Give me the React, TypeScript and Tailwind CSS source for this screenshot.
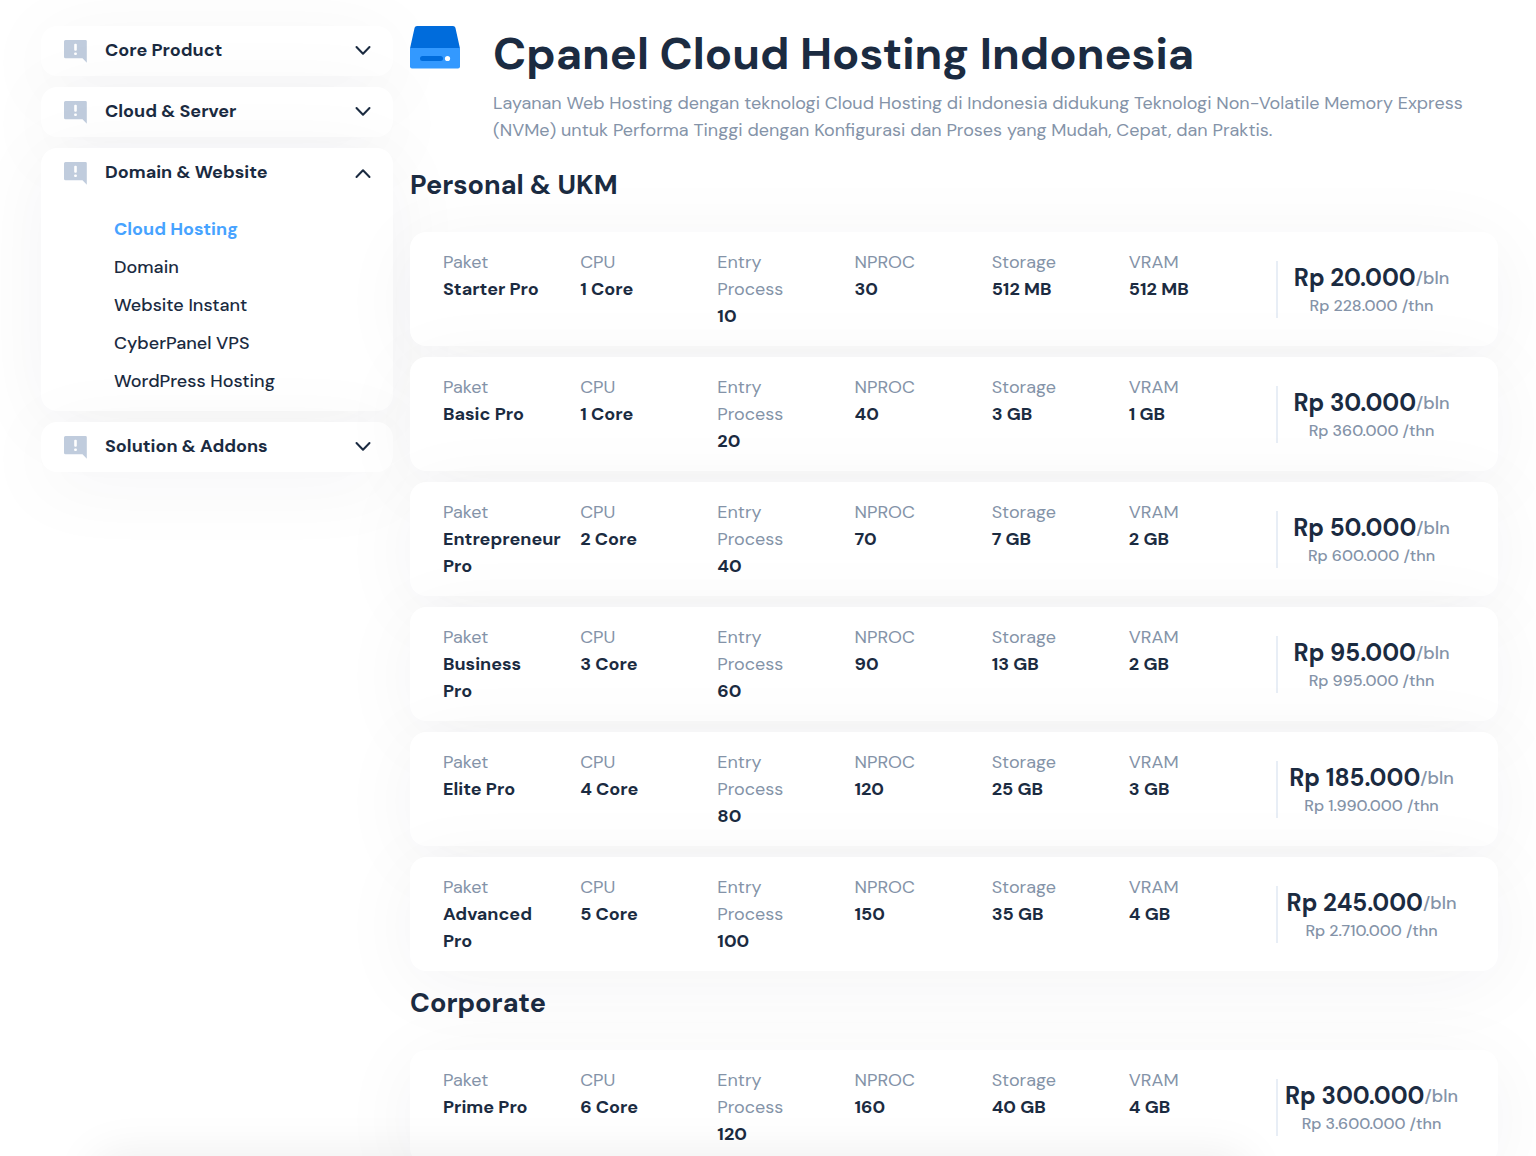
import { useState } from "react";
import clsx from "clsx";

const menus: { title: string; items: string[] }[] = [
  { title: "Core Product", items: [] },
  { title: "Cloud & Server", items: [] },
  {
    title: "Domain & Website",
    items: ["Cloud Hosting", "Domain", "Website Instant", "CyberPanel VPS", "WordPress Hosting"],
  },
  { title: "Solution & Addons", items: [] },
];

interface Plan {
  name: string;
  cpu: string;
  entry: string;
  nproc: string;
  storage: string;
  vram: string;
  monthly: string;
  yearly: string;
}

const personal: Plan[] = [
  { name: "Starter Pro", cpu: "1 Core", entry: "10", nproc: "30", storage: "512 MB", vram: "512 MB", monthly: "20.000", yearly: "228.000" },
  { name: "Basic Pro", cpu: "1 Core", entry: "20", nproc: "40", storage: "3 GB", vram: "1 GB", monthly: "30.000", yearly: "360.000" },
  { name: "Entrepreneur Pro", cpu: "2 Core", entry: "40", nproc: "70", storage: "7 GB", vram: "2 GB", monthly: "50.000", yearly: "600.000" },
  { name: "Business Pro", cpu: "3 Core", entry: "60", nproc: "90", storage: "13 GB", vram: "2 GB", monthly: "95.000", yearly: "995.000" },
  { name: "Elite Pro", cpu: "4 Core", entry: "80", nproc: "120", storage: "25 GB", vram: "3 GB", monthly: "185.000", yearly: "1.990.000" },
  { name: "Advanced Pro", cpu: "5 Core", entry: "100", nproc: "150", storage: "35 GB", vram: "4 GB", monthly: "245.000", yearly: "2.710.000" },
];

const corporate: Plan[] = [
  { name: "Prime Pro", cpu: "6 Core", entry: "120", nproc: "160", storage: "40 GB", vram: "4 GB", monthly: "300.000", yearly: "3.600.000" },
];

const NoticeIcon = () => (
  <svg className="h-6 w-6 shrink-0" viewBox="0 0 24 24" aria-hidden="true">
    <path d="M2.500 1h20A1.300 1.300 0 0 1 23.800 2.300V23.700L19.500 19.200H2.500A1.500 1.500 0 0 1 1 17.700V2.500A1.500 1.500 0 0 1 2.500 1Z" fill="#c0ccdd" />
    <rect x="11.200" y="4.700" width="2.600" height="7" rx="1" fill="#fff" />
    <rect x="11.200" y="13.500" width="2.600" height="2.600" rx="0.800" fill="#fff" />
  </svg>
);

const Chevron = ({ open }: { open: boolean }) => (
  <svg
    className={clsx("h-4 w-4 shrink-0", open && "rotate-180")}
    viewBox="0 0 16 16"
    fill="none"
    stroke="currentColor"
    strokeWidth="2"
    strokeLinecap="round"
    strokeLinejoin="round"
    aria-hidden="true"
  >
    <path d="M1.500 4 8 10.800l6.500-6.800" />
  </svg>
);

const DriveIcon = () => (
  <svg className="h-[43px] w-[50px] shrink-0" viewBox="0 0 50 43" aria-hidden="true">
    <path d="M7 0h36a2.500 2.500 0 0 1 2.400 1.800L50 22.500H0L4.600 1.800A2.500 2.500 0 0 1 7 0Z" fill="#006cdc" />
    <path d="M0 22h50v18.500a2 2 0 0 1-2 2H2a2 2 0 0 1-2-2Z" fill="#3399ff" />
    <rect x="10" y="30" width="23" height="5" rx="2.500" fill="#006cdc" />
    <circle cx="37.500" cy="32.500" r="2.600" fill="#fff" />
  </svg>
);

const Sidebar = () => {
  const [openMenu, setOpenMenu] = useState("Domain & Website");

  return (
    <aside className="flex w-[352px] shrink-0 flex-col gap-[11px]">
      {menus.map(({ title, items }) => {
        const open = openMenu === title;
        return (
          <div key={title} className="rounded-2xl bg-white shadow-[0_12px_80px_rgba(30,35,60,0.05)]">
            <button
              type="button"
              aria-expanded={open}
              onClick={() => setOpenMenu(open ? "" : title)}
              className="flex h-[50px] w-full items-center px-[22px] text-left text-lg font-bold"
            >
              <NoticeIcon />
              <span className="flex-1 pb-0.5 pl-[18px]">{title}</span>
              <Chevron open={open} />
            </button>
            {open && items.length > 0 && (
              <ul className="flex flex-col pt-3 pb-[11px] pl-[73px]">
                {items.map((item) => (
                  <li key={item}>
                    <a
                      href="#"
                      className={clsx(
                        "block text-lg leading-[38px]",
                        item === "Cloud Hosting" ? "font-bold text-[#47a3ff]" : "font-medium",
                      )}
                    >
                      {item}
                    </a>
                  </li>
                ))}
              </ul>
            )}
          </div>
        );
      })}
    </aside>
  );
};

const PlanCard = ({ plan }: { plan: Plan }) => {
  const specs = [
    ["Paket", plan.name],
    ["CPU", plan.cpu],
    ["Entry Process", plan.entry],
    ["NPROC", plan.nproc],
    ["Storage", plan.storage],
    ["VRAM", plan.vram],
  ];

  return (
    <article className="flex rounded-2xl bg-white px-[33px] pt-[17px] pb-4 shadow-[0_12px_80px_rgba(30,35,60,0.05)]">
      <dl className="grid flex-1 grid-cols-6 text-lg leading-[27px]">
        {specs.map(([label, value]) => (
          <div key={label} className="min-w-0 pr-7">
            <dt className="text-[#8493a8]">{label}</dt>
            <dd className="font-bold">{value}</dd>
          </div>
        ))}
      </dl>
      <div className="mt-3 ml-[10px] flex h-[57px] w-[189px] flex-col items-center border-l-2 border-[#e8eef6] text-[#8493a8]">
        <p className="flex items-center text-lg leading-[34px] font-medium whitespace-nowrap">
          <strong className="text-2xl leading-[34px] font-bold text-[#1b2b41]">Rp {plan.monthly}</strong>
          <span>/bln</span>
        </p>
        <p className="text-base leading-[22px] font-medium">Rp {plan.yearly} /thn</p>
      </div>
    </article>
  );
};

const PlanSection = ({ title, plans }: { title: string; plans: Plan[] }) => (
  <section>
    <h2 className="text-[27px] leading-8 font-bold">{title}</h2>
    <div className="mt-[31px] flex flex-col gap-[11px]">
      {plans.map((plan) => (
        <PlanCard key={plan.name} plan={plan} />
      ))}
    </div>
  </section>
);

const App = () => {
  return (
    <div className="h-screen overflow-hidden bg-white pt-[26px] pr-[38px] pl-[41px] font-['DM_Sans',Inter,sans-serif] text-[#1b2b41]">
      <div className="flex items-start gap-[17px]">
        <Sidebar />
        <main className="min-w-0 flex-1">
          <header className="flex">
            <DriveIcon />
            <div className="pl-[33px]">
              <h1 className="text-[45px] leading-[56px] font-bold">Cpanel Cloud Hosting Indonesia</h1>
              <p className="mt-2 text-lg leading-[27px] text-[#8493a8]">
                Layanan Web Hosting dengan teknologi Cloud Hosting di Indonesia didukung Teknologi Non-Volatile Memory
                Express (NVMe) untuk Performa Tinggi dengan Konfigurasi dan Proses yang Mudah, Cepat, dan Praktis.
              </p>
            </div>
          </header>
          <div className="mt-[25px] flex flex-col gap-4">
            <PlanSection title="Personal & UKM" plans={personal} />
            <PlanSection title="Corporate" plans={corporate} />
          </div>
        </main>
      </div>

      {/* Bottom bar parked below the fold, only its shadow shows */}
      <div className="pointer-events-none fixed top-full right-[290px] left-24 h-16 rounded-xl shadow-[0_0_48px_rgba(0,0,0,0.08)]" />
    </div>
  );
};

export default App;
